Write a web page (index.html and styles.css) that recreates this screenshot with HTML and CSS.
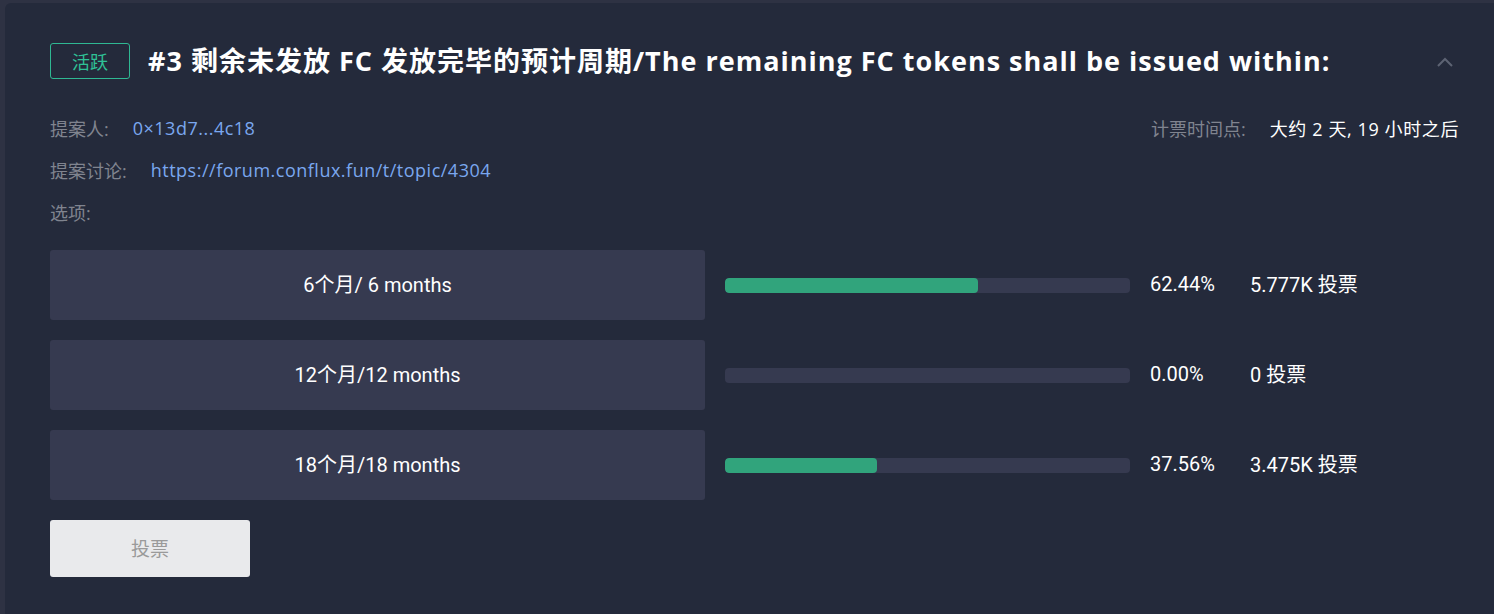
FILE: index.html
```html
<!DOCTYPE html>
<html>
<head>
<meta charset="utf-8">
<link rel="stylesheet" href="styles.css">
</head>
<body>
<div class="card">
    <div class="head">
        <span class="tag">活跃</span>
        <h1 class="title">#3 剩余未发放 FC 发放完毕的预计周期/The remaining FC tokens shall be issued within:</h1>
        <svg class="chevron" width="18" height="12" viewBox="0 0 18 12"><path d="M2 10 L9 3 L16 10" fill="none" stroke="#5d6373" stroke-width="2"/></svg>
    </div>
    <div class="meta">
        <div class="line">
            <span class="label">提案人:</span><span class="link">0×13d7...4c18</span>
        </div>
        <div class="line">
            <span class="label">计票时间点:</span><span class="value">大约 2 天, 19 小时之后</span>
        </div>
    </div>
    <div class="line">
        <span class="label">提案讨论:</span><span class="link">https://forum.conflux.fun/t/topic/4304</span>
    </div>
    <div class="line">
        <span class="label">选项:</span>
    </div>
    <div class="options">
        <div class="option">
            <div class="choice">6个月/ 6 months</div>
            <div class="bar"><div class="fill" style="width: 62.44%"></div></div>
            <span class="pct">62.44%</span>
            <span class="count">5.777K 投票</span>
        </div>
        <div class="option">
            <div class="choice">12个月/12 months</div>
            <div class="bar"><div class="fill" style="width: 0%"></div></div>
            <span class="pct">0.00%</span>
            <span class="count">0 投票</span>
        </div>
        <div class="option">
            <div class="choice">18个月/18 months</div>
            <div class="bar"><div class="fill" style="width: 37.56%"></div></div>
            <span class="pct">37.56%</span>
            <span class="count">3.475K 投票</span>
        </div>
    </div>
    <button class="vote">投票</button>
</div>
</body>
</html>
```

FILE: styles.css
```css
body {
    margin: 0;
    background-color: #2e3243;
    font-family: "Open Sans", "Noto Sans CJK SC", sans-serif;
    height: 614px;
    overflow: hidden;
}
.card {
    margin: 3px 0 0 5px;
    height: 611px;
    box-sizing: border-box;
    background-color: #242a3b;
    border-radius: 6px 0 0 0;
    padding: 40px 35px 0 45px;
}
.head {
    display: flex;
    align-items: center;
    height: 36px;
}
.tag {
    width: 80px;
    height: 36px;
    box-sizing: border-box;
    border: 1px solid #2fb893;
    border-radius: 3px;
    color: #2fc196;
    font: 18px "Noto Sans CJK SC", sans-serif;
    display: flex;
    align-items: center;
    justify-content: center;
}
.title {
    margin: 0 0 0 18px;
    padding-bottom: 3px;
    flex: 1;
    color: #ffffff;
    font: bold 27px "Open Sans", "Noto Sans CJK SC", sans-serif;
    letter-spacing: 1px;
    white-space: nowrap;
}
.chevron {
    margin-right: 5px;
    margin-top: 2px;
}
.meta {
    display: flex;
    justify-content: space-between;
    margin-top: 28px;
}
.line {
    display: flex;
    align-items: center;
    height: 42px;
    font-size: 18px;
}
.label {
    color: #80848f;
    margin-right: 24px;
}
.link {
    color: #7aa7ef;
    letter-spacing: 0.5px;
}
.value {
    color: #ffffff;
    letter-spacing: 0.6px;
}
.options {
    margin-top: 17px;
    display: flex;
    flex-direction: column;
    gap: 20px;
}
.option {
    display: flex;
    align-items: center;
    height: 70px;
    color: #ffffff;
    font: 20px Roboto, "Noto Sans CJK SC", sans-serif;
}
.choice {
    width: 655px;
    height: 70px;
    box-sizing: border-box;
    padding-bottom: 3px;
    background-color: #363a50;
    border-radius: 3px;
    display: flex;
    align-items: center;
    justify-content: center;
}
.bar {
    width: 405px;
    height: 15px;
    margin: 0 20px;
    background-color: #363a50;
    border-radius: 4px;
    overflow: hidden;
}
.fill {
    height: 100%;
    background-color: #31a47c;
    border-radius: 4px;
}
.pct, .count {
    padding-bottom: 3px;
}
.pct {
    width: 100px;
}
.vote {
    margin-top: 20px;
    width: 200px;
    height: 57px;
    padding-bottom: 3px;
    border: none;
    border-radius: 3px;
    background-color: #e9eaec;
    color: #9a9a9a;
    font: 19px "Noto Sans CJK SC", sans-serif;
}
```
